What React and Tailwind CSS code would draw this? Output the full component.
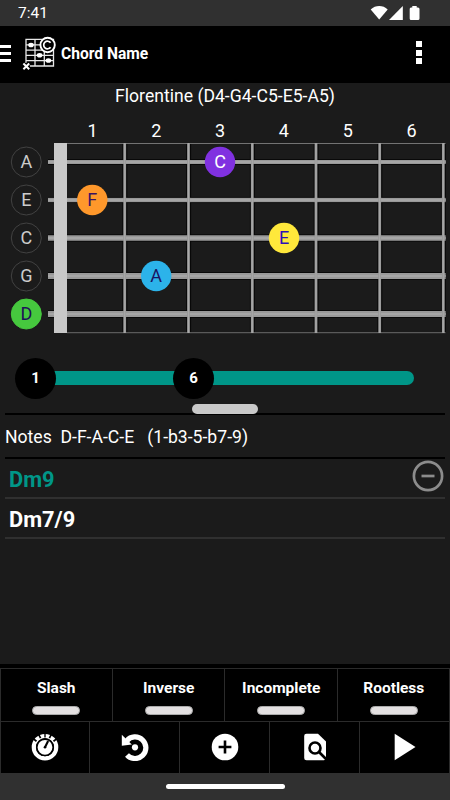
import React, { useState } from "react";

const strings = [
  { note: "A", y: 162, width: 4 },
  { note: "E", y: 200, width: 4.3 },
  { note: "C", y: 238, width: 5.5 },
  { note: "G", y: 276, width: 6 },
  { note: "D", y: 314, width: 6, fill: "#46c83e", color: "#1d1158" },
];

const frets = [124.7, 188.5, 252.3, 316, 379.7, 443.3];

const fingers = [
  { note: "C", x: 220, y: 162, fill: "#8031e0", color: "#ffffff" },
  { note: "F", x: 92.3, y: 200, fill: "#ff982b", color: "#3b1260" },
  { note: "E", x: 284, y: 238, fill: "#ffe83b", color: "#2c10b8" },
  { note: "A", x: 156.2, y: 276, fill: "#2cb3ea", color: "#1a1464" },
];

const filters = ["Slash", "Inverse", "Incomplete", "Rootless"];

const chords = ["Dm9", "Dm7/9"];

function classNames(...classes) {
  return classes.filter(Boolean).join(" ");
}

function StatusBar() {
  return (
    <div className="flex h-[26px] shrink-0 items-center justify-between bg-[#303030] pl-[18px] pr-[30px]">
      <span className="pt-px text-[15.5px] leading-none">7:41</span>
      <svg width="50" height="16" viewBox="0 0 50 16" fill="#fff">
        <path d="M0.7 4.4C5.5-.2 13-.2 17.7 4.4L9.2 14.5Z" />
        <path d="M19 15H32.8V1Z" />
        <path d="M42.3 1h4.4v1.5h1.3q1.5 0 1.5 1.5v9.5q0 1.5-1.5 1.5h-7q-1.3 0-1.3-1.5V4q0-1.5 1.3-1.5h1.3z" />
      </svg>
    </div>
  );
}

function Header() {
  return (
    <header className="flex h-[57px] shrink-0 items-center bg-black pb-[3px]">
      <button type="button" aria-label="Menu" className="w-[11px] space-y-[4px]">
        <span className="block h-[3px] bg-white" />
        <span className="block h-[3px] bg-white" />
        <span className="block h-[3px] bg-white" />
      </button>
      <svg className="ml-[11px] mt-px" width="35" height="35" viewBox="22 35 35 35">
        <path
          d="M26 38.3H53.5V65H26ZM35 38.3V65M44.3 38.3V65M26 43.8H53.5M26 49.1H53.5M26 54.4H53.5M26 59.7H53.5"
          fill="none"
          stroke="#e8e8e8"
          strokeWidth="1.3"
        />
        <g fill="#fff">
          <ellipse cx="31" cy="44" rx="2.8" ry="2.3" />
          <ellipse cx="39.6" cy="54.2" rx="2.8" ry="2.3" />
          <ellipse cx="48.4" cy="59.5" rx="2.8" ry="2.3" />
        </g>
        <circle cx="47.6" cy="44" r="7.2" fill="#000" stroke="#fff" strokeWidth="1.9" />
        <path d="M50.6 41.8A3.8 3.8 0 1 0 50.6 46.2" fill="none" stroke="#fff" strokeWidth="1.7" />
        <circle cx="26.3" cy="65.3" r="3.6" fill="#000" />
        <path d="M23.4 62.5L29.2 68.3M29.2 62.5L23.4 68.3" stroke="#fff" strokeWidth="2" />
      </svg>
      <h1 className="ml-[4px] pt-[3px] text-[15.6px] font-bold leading-none">Chord Name</h1>
      <button type="button" aria-label="More" className="ml-auto mr-[28px] mt-[-1px] space-y-[2.6px]">
        <span className="block size-[6px] bg-white" />
        <span className="block size-[6px] bg-white" />
        <span className="block size-[6px] bg-white" />
      </button>
    </header>
  );
}

function Fretboard() {
  return (
    <svg
      className="block shrink-0"
      width="450"
      height="230"
      viewBox="0 112 450 230"
      fontSize="18"
      textAnchor="middle"
    >
      {frets.map((x, i) => (
        <text key={x} x={92.5 + i * 63.8} y="137" fill="#fff">
          {i + 1}
        </text>
      ))}
      <path d="M67 143.5H445.5" stroke="#737373" />
      <path d="M67 332.7H445.5" stroke="#5a5a5a" strokeWidth="1.3" />
      {/* dark outlines sit under both wires and strings */}
      {frets.map((x) => (
        <rect key={x} x={x - 2.4} y="144" width="5" height="188" fill="#080808" />
      ))}
      {strings.map(({ y, width }) => (
        <g key={y}>
          <rect x="48" y={y - width / 2 - 0.9} width="397.7" height={width + 1.8} fill="#080808" />
          <rect x="48" y={y - width / 2} width="397.7" height={width} fill="#999" />
          <rect x="48" y={y - 0.8} width="397.7" height="1.6" fill="#aaa" />
        </g>
      ))}
      {frets.map((x) => (
        <g key={x}>
          <rect x={x - 1.4} y="143" width="2.8" height="190" fill="#999" />
          <rect x={x - 0.5} y="143" width="1" height="190" fill="#aaa" />
        </g>
      ))}
      <rect x="54" y="143" width="13" height="190" fill="#c9c9c9" />
      {strings.map(({ note, y, fill, color }) => (
        <g key={note}>
          <circle cx="26.3" cy={y} r="15" fill={fill || "#1b1b1b"} stroke={fill || "#424242"} />
          <text x="26.3" y={y + 6.3} fill={color || "#ccc"}>
            {note}
          </text>
        </g>
      ))}
      {fingers.map(({ note, x, y, fill, color }) => (
        <g key={note}>
          <circle cx={x} cy={y} r="15.2" fill={fill} />
          <text x={x} y={y + 6.3} fill={color}>
            {note}
          </text>
        </g>
      ))}
    </svg>
  );
}

function RangeSlider({ from, to }) {
  return (
    <div className="flex h-[62px] shrink-0 items-center pl-[15px] pt-[10px] text-[15px] font-bold">
      <div className="z-10 flex size-[41px] items-center justify-center rounded-full bg-black pt-px">
        {from}
      </div>
      <div className="-mx-1 h-[14px] w-[125px] bg-[#009688]" />
      <div className="z-10 flex size-[41px] items-center justify-center rounded-full bg-black pt-px">
        {to}
      </div>
      <div className="-ml-1 h-[14px] w-[204px] rounded-r-full bg-[#009688]" />
    </div>
  );
}

function ChordList({ selected, setSelected }) {
  return (
    <ul className="mx-[5px] border-t-2 border-black">
      {chords.map((chord) => (
        <li
          key={chord}
          onClick={() => setSelected(chord)}
          className={classNames(
            "flex h-10 items-center justify-between border-b-2 border-[#303030] pl-1 pr-px pt-[3px] text-[21.8px] font-bold leading-none",
            selected === chord && "text-[#009688]"
          )}
        >
          {chord}
          {selected === chord && (
            <svg className="-mt-[7px]" width="32" height="32" fill="none" stroke="#8c8c8c" strokeWidth="2.7">
              <circle cx="16" cy="16" r="14.1" />
              <path d="M9.5 16H22.5" />
            </svg>
          )}
        </li>
      ))}
    </ul>
  );
}

function TimerIcon() {
  return (
    <svg width="28" height="28" viewBox="0 0 28 28">
      <circle cx="14" cy="14.2" r="11.2" fill="none" stroke="#fff" strokeWidth="4.2" />
      <path
        d="M5.5 8.2L0.5 4.4M9.6 5.2L6.7 -.4M18.4 5.2L21.3 -.4M22.5 8.2L27.5 4.4"
        stroke="#000"
        strokeWidth="1.7"
      />
      <path d="M14 4.6V0" stroke="#000" strokeWidth="1.4" />
      <circle cx="14" cy="14.3" r="8.2" fill="#fff" stroke="#000" strokeWidth="1.6" />
      <path d="M14 14.3L17.1 8" stroke="#000" strokeWidth="2.1" />
      <circle cx="14" cy="14.3" r="1.3" fill="#000" />
    </svg>
  );
}

function RestoreIcon() {
  return (
    <svg width="28" height="28" viewBox="0 0 28 28">
      <path d="M5.8 7.8A10.8 10.8 0 1 1 6 21.9" fill="none" stroke="#fff" strokeWidth="5.2" />
      <path d="M.8 1.8V12.8L10.8 11.5Z" fill="#fff" />
      <circle cx="14" cy="14.3" r="3.1" fill="#fff" />
    </svg>
  );
}

function AddIcon() {
  return (
    <svg width="28" height="28" viewBox="0 0 28 28">
      <circle cx="14" cy="14" r="13.3" fill="#fff" />
      <path d="M14 7.6V20.4M7.6 14H20.4" stroke="#000" strokeWidth="2.6" />
    </svg>
  );
}

function SearchFileIcon() {
  return (
    <svg width="28" height="28" viewBox="0 0 28 28">
      <path d="M5.5 .7H17L25 8.5V25Q25 27.3 22.7 27.3H5.5Q3.2 27.3 3.2 25V3Q3.2 .7 5.5 .7Z" fill="#fff" />
      <circle cx="14" cy="15" r="5.5" fill="none" stroke="#000" strokeWidth="2.6" />
      <path d="M18 19L25.5 26.5" stroke="#000" strokeWidth="2.7" />
    </svg>
  );
}

function PlayIcon() {
  return (
    <svg width="28" height="28" viewBox="0 0 28 28">
      <path d="M3.7 .7L24.5 14L3.7 27.3Z" fill="#fff" />
    </svg>
  );
}

const actions = [
  { label: "Metronome", Icon: TimerIcon },
  { label: "Reset", Icon: RestoreIcon },
  { label: "Add", Icon: AddIcon },
  { label: "Search", Icon: SearchFileIcon },
  { label: "Play", Icon: PlayIcon },
];

export default function App() {
  const [selected, setSelected] = useState("Dm9");

  return (
    <div className="flex h-[800px] w-[450px] flex-col overflow-hidden bg-[#1b1b1b] font-['Roboto',sans-serif] text-white">
      <StatusBar />
      <Header />
      <div className="h-[29px] shrink-0 pt-px text-center text-[17.6px] leading-[24px]">
        Florentine (D4-G4-C5-E5-A5)
      </div>
      <Fretboard />
      <RangeSlider from={1} to={6} />
      <div className="mx-[5px] flex h-[11px] shrink-0 justify-center border-b-2 border-black">
        <div className="h-[10px] w-[66px] shrink-0 rounded-full bg-[#c9c9c9]" />
      </div>
      <div className="flex h-[42px] shrink-0 items-center whitespace-pre pl-[5px] pt-[2px] text-[17.6px]">
        {"Notes  D-F-A-C-E   (1-b3-5-b7-9)"}
      </div>
      <ChordList selected={selected} setSelected={setSelected} />
      <footer className="mt-auto shrink-0 bg-black pt-[4px]">
        <div className="grid h-[53px] grid-cols-4 border-t border-[#2b2b2b]">
          {filters.map((label) => (
            <button
              key={label}
              type="button"
              className="flex flex-col items-center border-r border-[#2b2b2b] pl-px pt-[10px] text-[15.5px] font-bold leading-[18px] first:border-l first:pl-0"
            >
              {label}
              <span className="mt-[9px] h-[9px] w-[48px] rounded-full border border-[#aaa] bg-[#e3e0e1]" />
            </button>
          ))}
        </div>
        <div className="grid h-[52px] grid-cols-5 border-t border-[#2b2b2b]">
          {actions.map(({ label, Icon }) => (
            <button
              key={label}
              type="button"
              aria-label={label}
              className="flex items-center justify-center border-r border-[#2b2b2b] pb-px pl-px first:border-l first:pl-0"
            >
              <Icon />
            </button>
          ))}
        </div>
        <div className="flex h-[27px] items-center justify-center bg-[#303030]">
          <div className="h-[5px] w-[119px] rounded-full bg-white" />
        </div>
      </footer>
    </div>
  );
}
